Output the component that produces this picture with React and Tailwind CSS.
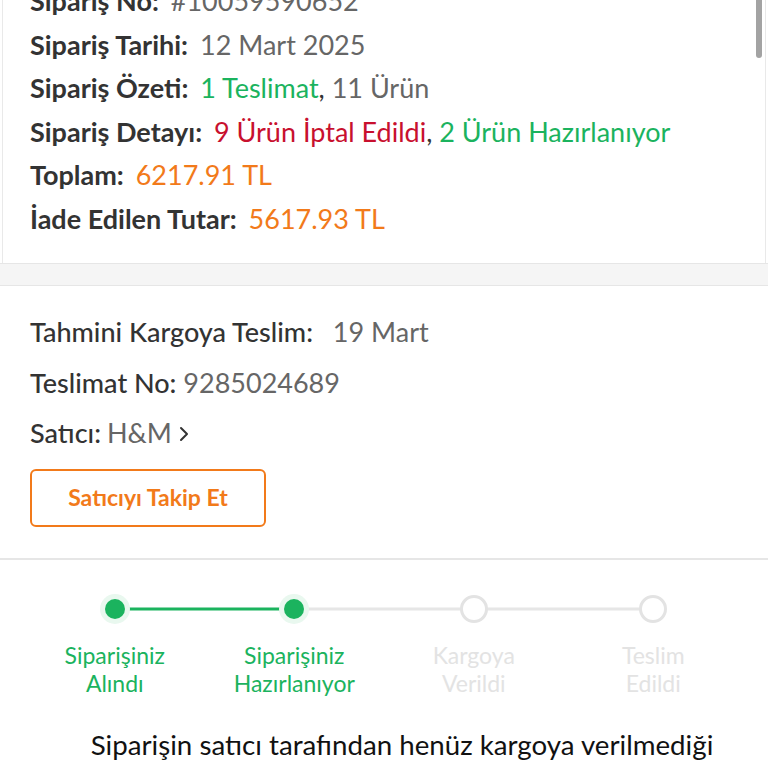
import React from 'react';

const steps = [
  { top: 'Siparişiniz', bottom: 'Alındı', done: true },
  { top: 'Siparişiniz', bottom: 'Hazırlanıyor', done: true },
  { top: 'Kargoya', bottom: 'Verildi', done: false },
  { top: 'Teslim', bottom: 'Edildi', done: false },
];

const Row = ({ label, children }) => (
  <div className="leading-[43.5px] whitespace-nowrap">
    <span className="font-bold text-[#333333]">{label}</span>{' '}
    <span className="ml-[5px]">{children}</span>
  </div>
);

export default function App() {
  return (
    <div className="relative h-[768px] w-[768px] overflow-hidden bg-white text-[27px]" style={{ fontFamily: 'Lato, "Noto Sans", sans-serif' }}>
      {/* scrollbar */}
      <div className="absolute right-[6px] top-0 z-10 h-[58px] w-[6px] rounded-b-full bg-[#a3a3a3]" />

      {/* order summary card */}
      <div className="mx-[2px] -mt-[21px] border-x border-[#e9e9e9] bg-white px-[27px] pb-[23px]">
        <Row label="Sipariş No:"><span className="text-[#666666]">#10059590652</span></Row>
        <Row label="Sipariş Tarihi:"><span className="text-[#666666]">12 Mart 2025</span></Row>
        <Row label="Sipariş Özeti:">
          <span className="text-[#1bb35e]">1 Teslimat</span>
          <span className="text-[#333333]">,</span>{' '}
          <span className="text-[#666666]">11 Ürün</span>
        </Row>
        <Row label="Sipariş Detayı:">
          <span className="text-[#c8102e]">9 Ürün İptal Edildi</span>
          <span className="text-[#333333]">,</span>{' '}
          <span className="text-[#1bb35e]">2 Ürün Hazırlanıyor</span>
        </Row>
        <Row label="Toplam:"><span className="text-[#f27a1a]">6217.91 TL</span></Row>
        <Row label="İade Edilen Tutar:"><span className="text-[#f27a1a]">5617.93 TL</span></Row>
      </div>

      <div className="h-[23px] border-y border-[#e6e6e6] bg-[#f5f5f5]" />

      {/* delivery section */}
      <div className="border-b-2 border-[#e6e6e6] px-[30px] pt-[21px] pb-[31px]">
        <div className="leading-[50.5px] text-[#333333]">
          <div className="whitespace-nowrap"><span className="font-medium">Tahmini Kargoya Teslim:</span> <span className="ml-[13px] text-[#666666]">19 Mart</span></div>
          <div className="whitespace-nowrap"><span className="font-medium">Teslimat No:</span> <span className="text-[#666666]">9285024689</span></div>
          <div className="flex items-center gap-[6px] whitespace-nowrap">
            <span className="font-medium">Satıcı:</span>
            <span className="text-[#666666]">H&amp;M</span>
            <svg width="12" height="18" viewBox="0 0 12 18" className="mt-[2px]"><path d="M3 3l6 6-6 6" fill="none" stroke="#333" strokeWidth="2" strokeLinecap="round" strokeLinejoin="round" /></svg>
          </div>
        </div>
        <button className="mt-[10px] flex h-[58px] w-[236px] items-center justify-center rounded-[6px] border-2 border-[#f27a1a] text-[23px] font-bold text-[#f27a1a]">
          Satıcıyı Takip Et
        </button>
      </div>

      {/* stepper */}
      <div className="mx-[25px] mt-[35px] grid grid-cols-4">
        {steps.map((s, i) => (
          <div key={i} className="flex flex-col items-center">
            <div className="relative flex h-[28px] w-full items-center justify-center">
              {i > 0 && (
                <div className={`absolute left-0 right-1/2 top-1/2 h-[3px] -translate-y-1/2 ${s.done ? 'bg-[#1bb35e]' : 'bg-[#e6e6e6]'}`} />
              )}
              {i < steps.length - 1 && (
                <div className={`absolute left-1/2 right-0 top-1/2 h-[3px] -translate-y-1/2 ${steps[i + 1].done ? 'bg-[#1bb35e]' : 'bg-[#e6e6e6]'}`} />
              )}
              {s.done ? (
                <div className="relative flex h-[30px] w-[30px] items-center justify-center rounded-full bg-[#e9f8ef]">
                  <div className="h-[20px] w-[20px] rounded-full bg-[#1bb35e]" />
                </div>
              ) : (
                <div className="relative h-[28px] w-[28px] rounded-full border-[3px] border-[#e3e3e3] bg-white" />
              )}
            </div>
            <div className={`mt-[18px] text-center text-[23px] leading-[28px] ${s.done ? 'text-[#1bb35e]' : 'text-[#e3e3e3]'}`}>
              <div>{s.top}</div>
              <div>{s.bottom}</div>
            </div>
          </div>
        ))}
      </div>

      <div className="mt-[32px] pl-[36px] text-center text-[27.7px] leading-[32px] text-[#111111]">
        Siparişin satıcı tarafından henüz kargoya verilmediği
      </div>
    </div>
  );
}
